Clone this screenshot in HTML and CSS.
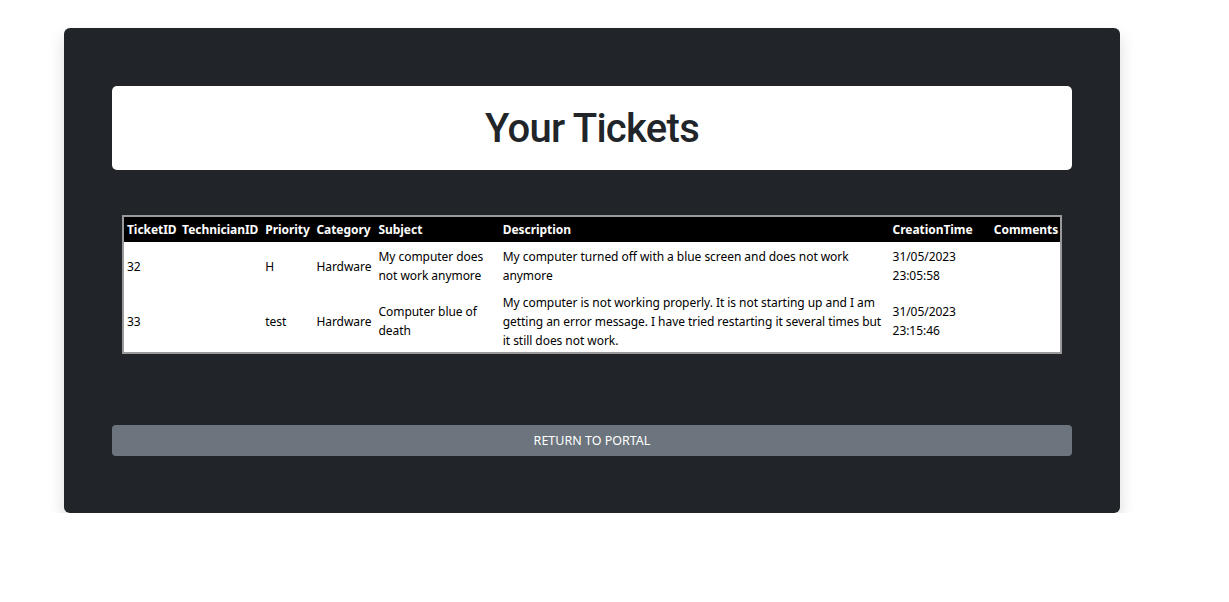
FILE: index.html
```html
<!DOCTYPE html>
<html lang="en">
<head>
<meta charset="utf-8">
<title>Your Tickets</title>
<link rel="stylesheet" href="styles.css">
</head>
<body>
<main class="card">
  <header class="title-box">
    <h1 class="title">Your Tickets</h1>
  </header>
  <div class="table-wrap">
    <table class="tickets">
      <colgroup>
        <col class="c1"><col class="c2"><col class="c3"><col class="c4">
        <col class="c5"><col class="c6"><col class="c7"><col class="c8">
      </colgroup>
      <thead>
        <tr>
          <th>TicketID</th><th>TechnicianID</th><th>Priority</th><th>Category</th>
          <th>Subject</th><th>Description</th><th>CreationTime</th><th>Comments</th>
        </tr>
      </thead>
      <tbody>
        <tr>
          <td>32</td><td></td><td>H</td><td>Hardware</td>
          <td>My computer does not work anymore</td>
          <td>My computer turned off with a blue screen and does not work anymore</td>
          <td>31/05/2023 23:05:58</td><td></td>
        </tr>
        <tr>
          <td>33</td><td></td><td>test</td><td>Hardware</td>
          <td>Computer blue of death</td>
          <td>My computer is not working properly. It is not starting up and I am getting an error message. I have tried restarting it several times but it still does not work.</td>
          <td>31/05/2023 23:15:46</td><td></td>
        </tr>
      </tbody>
    </table>
  </div>
  <button class="btn-return" type="button">RETURN TO PORTAL</button>
</main>
</body>
</html>
```
FILE: styles.css
```css
* { box-sizing: border-box; }
html, body { margin: 0; padding: 0; background: #fff; }
body { font-family: "Noto Sans", "Open Sans", sans-serif; }

.card {
  width: 1056px;
  margin: 28px 0 0 64px;
  background: #212529;
  border-radius: 6px;
  box-shadow: 0 8px 16px rgba(0,0,0,0.15);
  padding: 58px 48px 57px;
  display: flex;
  flex-direction: column;
}

.title-box {
  background: #fff;
  border-radius: 5px;
  height: 84px;
  display: flex;
  align-items: center;
  justify-content: center;
}
.title {
  margin: 0;
  font-family: Roboto, "Liberation Sans", sans-serif;
  font-weight: 500;
  font-size: 40px;
  letter-spacing: -0.7px;
  line-height: 48px;
  color: #212529;
  padding-top: 2px;
}

.table-wrap {
  margin: 45px 10px 0;
}
.tickets {
  width: 940px;
  table-layout: fixed;
  border-collapse: collapse;
  border: 2px solid #9a9a9a;
  background: #fff;
  font-size: 12px;
  letter-spacing: -0.05px;
  color: #000;
}
.c1 { width: 56px; } .c2 { width: 83px; } .c3 { width: 51px; } .c4 { width: 62px; }
.c5 { width: 124px; } .c6 { width: 389px; } .c7 { width: 101px; } .c8 { width: 70px; }

.tickets th {
  background: #000;
  color: #fff;
  font-weight: 700;
  text-align: left;
  height: 26px;
  padding: 0 3px;
  line-height: 19px;
  white-space: nowrap;
}
.tickets td {
  height: 48px;
  padding: 2.5px 3px;
  line-height: 19px;
  vertical-align: middle;
}

.btn-return {
  margin-top: 71px;
  height: 31px;
  width: 100%;
  border: 0;
  border-radius: 4px;
  background: #6c757d;
  color: #fff;
  font-family: "Noto Sans", "Open Sans", sans-serif;
  font-size: 12.5px;
  padding: 0;
}
```
